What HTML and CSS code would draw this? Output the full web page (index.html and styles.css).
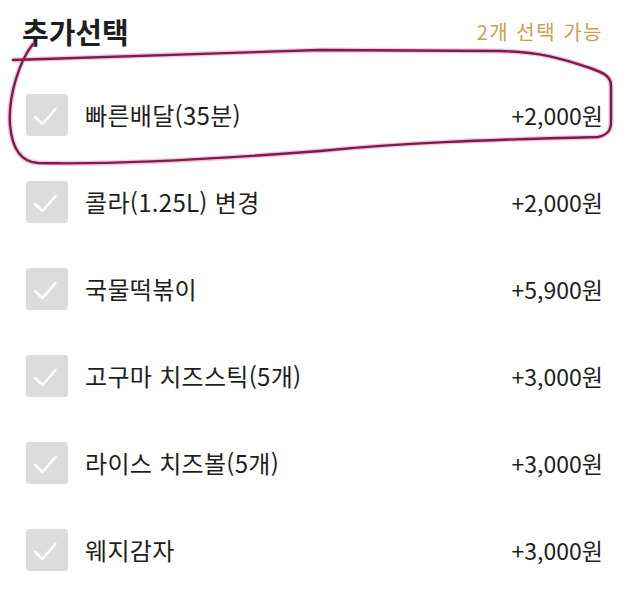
FILE: index.html
```html
<!DOCTYPE html>
<html lang="ko">

<head>
    <meta charset="UTF-8">
    <meta name="viewport" content="width=device-width, initial-scale=1.0">
    <title>추가선택</title>
    <link rel="stylesheet" href="styles.css">
</head>

<body>
    <div class="options">
        <div class="options-head">
            <h2>추가선택</h2>
            <span class="limit">2개 선택 가능</span>
        </div>
        <ul class="option-list">
            <li class="option">
                <span class="check"><svg viewBox="0 0 42 42"><path d="M9 23 L16.5 30 L29.5 15" /></svg></span>
                <span class="name">빠른배달(35분)</span>
                <span class="price">+2,000원</span>
            </li>
            <li class="option">
                <span class="check"><svg viewBox="0 0 42 42"><path d="M9 23 L16.5 30 L29.5 15" /></svg></span>
                <span class="name">콜라(1.25L) 변경</span>
                <span class="price">+2,000원</span>
            </li>
            <li class="option">
                <span class="check"><svg viewBox="0 0 42 42"><path d="M9 23 L16.5 30 L29.5 15" /></svg></span>
                <span class="name">국물떡볶이</span>
                <span class="price">+5,900원</span>
            </li>
            <li class="option">
                <span class="check"><svg viewBox="0 0 42 42"><path d="M9 23 L16.5 30 L29.5 15" /></svg></span>
                <span class="name">고구마 치즈스틱(5개)</span>
                <span class="price">+3,000원</span>
            </li>
            <li class="option">
                <span class="check"><svg viewBox="0 0 42 42"><path d="M9 23 L16.5 30 L29.5 15" /></svg></span>
                <span class="name">라이스 치즈볼(5개)</span>
                <span class="price">+3,000원</span>
            </li>
            <li class="option">
                <span class="check"><svg viewBox="0 0 42 42"><path d="M9 23 L16.5 30 L29.5 15" /></svg></span>
                <span class="name">웨지감자</span>
                <span class="price">+3,000원</span>
            </li>
        </ul>
    </div>

    <!-- hand drawn marker loop around the first option -->
    <svg class="scribble" viewBox="0 0 638 200">
        <path class="glow" d="M33 44 C20 60 8 95 10 125 C12 148 20 162 38 163 C120 165 230 158 320 151 C400 143 480 140 598 137 C608 135 611 130 611 122 L611 86 C611 77 605 73 590 68 C560 58 540 52 500 51 L320 50 L13 60" />
        <path class="line" d="M33 44 C20 60 8 95 10 125 C12 148 20 162 38 163 C120 165 230 158 320 151 C400 143 480 140 598 137 C608 135 611 130 611 122 L611 86 C611 77 605 73 590 68 C560 58 540 52 500 51 L320 50 L13 60" />
    </svg>
</body>

</html>
```

FILE: styles.css
```css
* {
    margin: 0;
    padding: 0;
    box-sizing: border-box;
}

body {
    background: #fff;
    font-family: "Noto Sans CJK KR", "Noto Sans", sans-serif;
    color: #1e1e1e;
}

.options {
    padding: 11px 35px 0 26px;
}

.options-head {
    display: flex;
    justify-content: space-between;
    align-items: center;
    height: 40px;
}

.options-head h2 {
    font-size: 29px;
    font-weight: 700;
    margin-left: -4px;
}

.limit {
    font-size: 20px;
    color: #c9a04e;
    letter-spacing: 1.5px;
}

.option-list {
    list-style: none;
    margin-top: 20px;
}

.option {
    display: flex;
    align-items: center;
    height: 87px;
}

.check {
    width: 42px;
    height: 42px;
    border-radius: 3px;
    background: #dcdcdc;
    flex-shrink: 0;
}

.check svg {
    display: block;
    width: 42px;
    height: 42px;
}

.check path {
    fill: none;
    stroke: #fff;
    stroke-width: 2.5;
    stroke-linecap: round;
    stroke-linejoin: round;
}

.name {
    margin-left: 17px;
    font-size: 24px;
    letter-spacing: 0.3px;
    flex: 1;
}

.price {
    font-size: 23px;
}

.scribble {
    position: absolute;
    top: 0;
    left: 0;
    width: 638px;
    height: 200px;
    pointer-events: none;
}

.scribble path {
    fill: none;
    stroke-linecap: round;
    stroke-linejoin: round;
}

.scribble .glow {
    stroke: #e0559a;
    stroke-width: 5;
    opacity: 0.35;
}

.scribble .line {
    stroke: #7e1c49;
    stroke-width: 2.4;
}
```
